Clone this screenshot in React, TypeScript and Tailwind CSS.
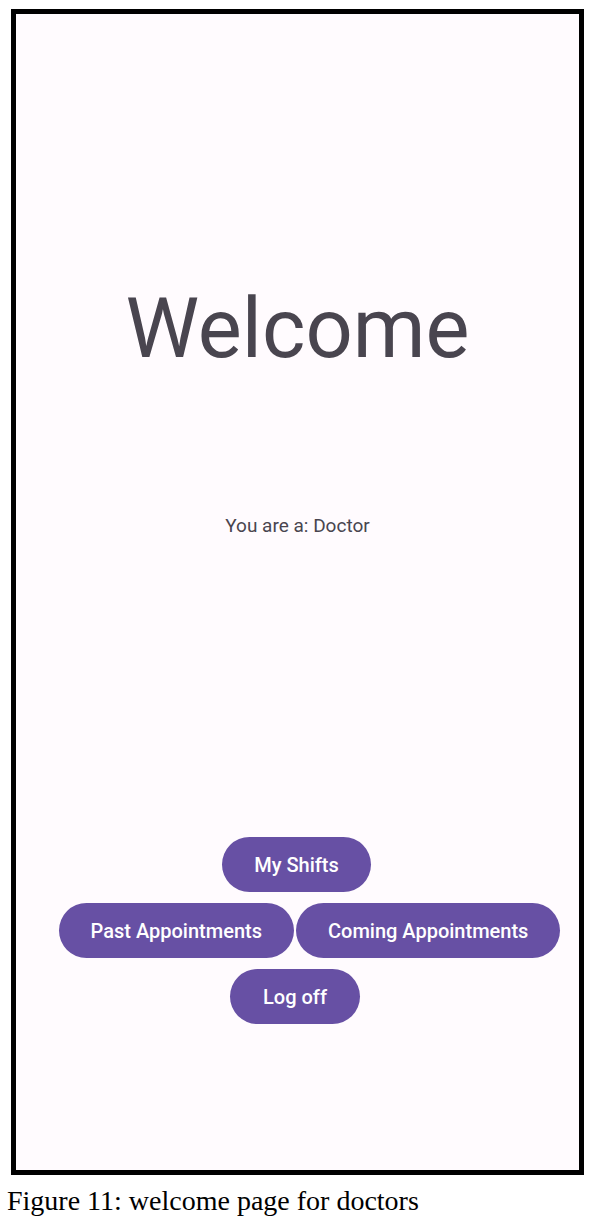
export default function App() {
  return (
    <main className="min-h-[1225px] w-[595px] bg-white font-['Roboto',sans-serif]">
      {/* Phone frame */}
      <div className="ml-[11px] mt-[9px] flex h-[1166px] w-[573px] flex-col border-[5px] border-black bg-[#fffbfe]">
        <h1 className="mt-[273px] text-center text-[83px] leading-none text-[#49454f]">Welcome</h1>
        <p className="mt-[146px] text-center text-[19px] leading-none text-[#49454f]">You are a: Doctor</p>

        <div className="mt-[302px] flex flex-col items-center gap-[11px]">
          <button className="mr-[2px] h-[55px] rounded-full bg-[#6750a4] px-[32px] text-[20px] font-medium text-white">
            My Shifts
          </button>
          <div className="flex gap-[2px] pl-[24px]">
            <button className="h-[55px] rounded-full bg-[#6750a4] px-[32px] text-[20px] font-medium text-white">
              Past Appointments
            </button>
            <button className="h-[55px] rounded-full bg-[#6750a4] px-[32px] text-[20px] font-medium text-white">
              Coming Appointments
            </button>
          </div>
          <button className="mr-[5px] h-[55px] rounded-full bg-[#6750a4] px-[33px] text-[20px] font-medium text-white">
            Log off
          </button>
        </div>
      </div>

      <p className="ml-[7px] mt-[12px] font-['Liberation_Serif',serif] text-[28px] leading-none text-black">
        Figure 11: welcome page for doctors
      </p>
    </main>
  );
}
